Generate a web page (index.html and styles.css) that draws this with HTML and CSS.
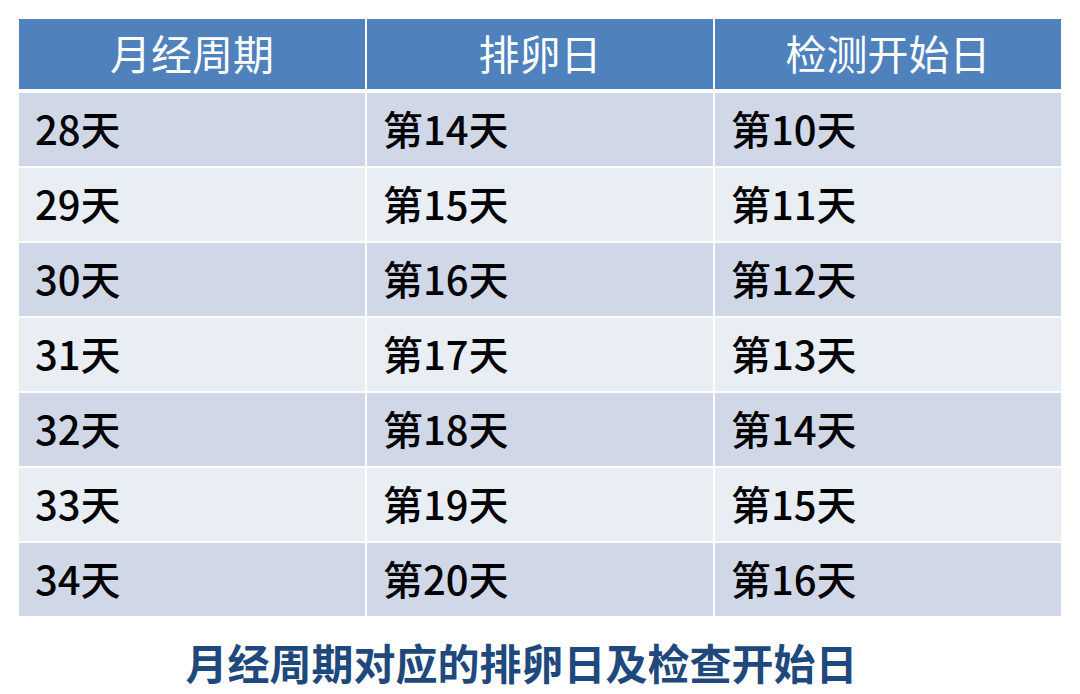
FILE: index.html
```html
<!DOCTYPE html>
<html lang="zh-CN">
<head>
<meta charset="utf-8">
<title>月经周期对应的排卵日及检查开始日</title>
<link rel="stylesheet" href="styles.css">
</head>
<body>
<main class="page">
  <div class="table">
    <div class="thead">
      <div class="cell head">月经周期</div>
      <div class="cell head">排卵日</div>
      <div class="cell head">检测开始日</div>
    </div>
    <div class="tbody">
      <div class="cell odd">28天</div><div class="cell odd">第14天</div><div class="cell odd">第10天</div>
      <div class="cell even">29天</div><div class="cell even">第15天</div><div class="cell even">第11天</div>
      <div class="cell odd">30天</div><div class="cell odd">第16天</div><div class="cell odd">第12天</div>
      <div class="cell even">31天</div><div class="cell even">第17天</div><div class="cell even">第13天</div>
      <div class="cell odd">32天</div><div class="cell odd">第18天</div><div class="cell odd">第14天</div>
      <div class="cell even">33天</div><div class="cell even">第19天</div><div class="cell even">第15天</div>
      <div class="cell odd">34天</div><div class="cell odd">第20天</div><div class="cell odd">第16天</div>
    </div>
  </div>
  <p class="caption">月经周期对应的排卵日及检查开始日</p>
</main>
</body>
</html>
```
FILE: styles.css
```css
html, body {
  margin: 0;
  padding: 0;
  background: #ffffff;
}
body {
  font-family: "Noto Sans CJK SC", "Noto Sans", sans-serif;
  width: 1080px;
  height: 694px;
  overflow: hidden;
}
.page {
  padding: 19px 19px 0 19px;
  display: flex;
  flex-direction: column;
}
.table {
  display: flex;
  flex-direction: column;
  gap: 4px;
}
.thead {
  display: grid;
  grid-template-columns: 346px 346px 346px;
  grid-template-rows: 70px;
  column-gap: 2px;
}
.tbody {
  display: grid;
  grid-template-columns: 346px 346px 346px;
  grid-template-rows: repeat(7, 73px);
  column-gap: 2px;
  row-gap: 2px;
}
.cell {
  display: flex;
  align-items: center;
  padding-left: 16px;
  padding-bottom: 4px;
  font-size: 40px;
  font-weight: 500;
  color: #000000;
  line-height: 1;
}
.head {
  background: #4f81bd;
  color: #ffffff;
  font-size: 41px;
  font-weight: 400;
  justify-content: center;
  padding-left: 0;
}
.odd {
  background: #d0d8e8;
}
.even {
  background: #e9edf4;
}
.caption {
  margin: 22px 0 0 0;
  padding-right: 37px;
  text-align: center;
  font-size: 42px;
  line-height: 48px;
  font-weight: 700;
  color: #1f497d;
}
```
